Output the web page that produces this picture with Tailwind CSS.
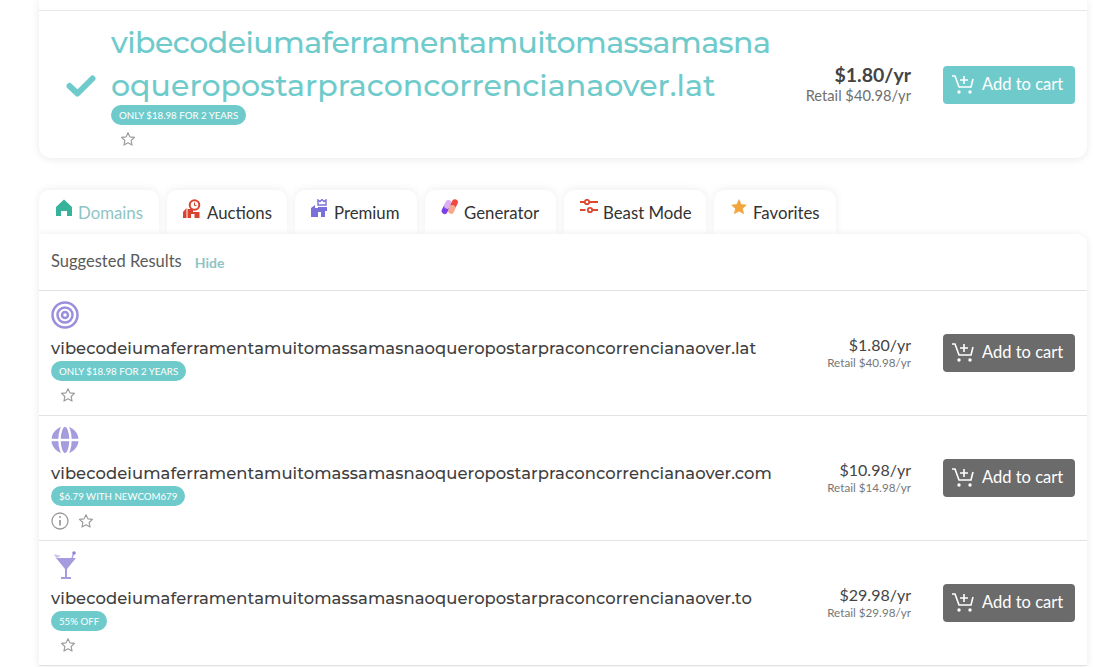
<!DOCTYPE html>
<html><head><meta charset="utf-8"><script src="https://cdn.jsdelivr.net/npm/@tailwindcss/browser@4"></script></head>
<body class="bg-white overflow-hidden font-['Lato','Noto_Sans',sans-serif] text-[#3f3f3f]">
<div class="w-[1093px] h-[667px] overflow-hidden pl-[39px] pr-[6px]">
  <section class="h-[158px] pt-[10px] bg-white rounded-b-[12px] shadow-[0_1px_8px_rgba(0,0,0,0.09)]">
    <div class="h-[148px] border-t border-[#e8e8e8] flex pr-[12px]">
      <div class="w-[72px] pt-[63px] pl-[27px] shrink-0">
        <svg width="30" height="24" viewBox="0 0 30 24"><path d="M3.500 12 L11.500 19.500 L26.500 4.500" fill="none" stroke="#6fcbcb" stroke-width="6" stroke-linecap="round" stroke-linejoin="round"/></svg>
      </div>
      <div class="w-[668px] shrink-0">
        <div class="pt-[10px] font-['Montserrat','Lato',sans-serif] font-medium text-[30px] leading-[43px] text-[#6fcbcb] whitespace-nowrap">
          <span class="block tracking-[-0.530px]">vibecodeiumaferramentamuitomassamasna</span>
          <span class="block tracking-[0.050px]">oqueropostarpraconcorrencianaover.lat</span>
        </div>
        <span class="mt-[-2px] block w-fit h-[20px] rounded-full bg-[#6fcbcb] px-[8px] text-[9.700px] leading-[20px] text-white">ONLY $18.98 FOR 2 YEARS</span>
        <div class="pl-[9px] pt-[6px]"><svg width="16" height="16" viewBox="0 0 24 24"><path d="M12 2.500l2.900 6.300 6.900.800-5.100 4.700 1.400 6.800-6.100-3.400-6.100 3.400 1.400-6.800-5.100-4.700 6.900-.800z" fill="none" stroke="#9a9a9a" stroke-width="1.700" stroke-linejoin="round"/></svg></div>
      </div>
      <div class="flex-1 text-right pt-[52px]">
        <div class="text-[19.500px] leading-[24px] font-bold text-[#444]">$1.80/yr</div>
        <div class="text-[14.700px] leading-[17px] text-[#6f6f6f]">Retail $40.98/yr</div>
      </div>
      <div class="pt-[55px] pl-[32px]">
        <button class="w-[132px] h-[38px] rounded-[4px] bg-[#6fcbcb] text-white text-[16.500px] flex items-center pl-[8px] gap-[7px]">
          <svg width="24" height="20" viewBox="0 0 24 20" fill="none" stroke="#fff" stroke-width="1.600"><path d="M1 1h3l4 11h12l2-8"/><path d="M13 1v8M9 5h8"/><circle cx="8" cy="17" r="1.700" fill="#fff" stroke="none"/><circle cx="19" cy="17" r="1.700" fill="#fff" stroke="none"/></svg>
          <span class="mt-[-1px]">Add to cart</span>
        </button>
      </div>
    </div>
  </section>

  <nav class="mt-[32px] h-[44px] flex gap-[8px] text-[16.800px] relative z-10">
    <div class="w-[120px] h-[45px] bg-white rounded-t-[10px] shadow-[0_-1px_8px_rgba(0,0,0,0.07)] flex items-start pl-[17px] pt-[9px] gap-[6px] text-[#8fc4c4]">
      <svg width="16" height="18" viewBox="0 0 16 18"><path d="M8 0.500L16 8v9h-5v-5H5v5H0V8z" fill="#38b39b"/></svg><span class="leading-[28px]">Domains</span>
    </div>
    <div class="w-[120px] h-[44px] bg-white rounded-t-[10px] shadow-[0_-1px_8px_rgba(0,0,0,0.07)] flex items-start pl-[16px] pt-[9px] gap-[6px] text-[#333]">
      <svg width="18" height="19" viewBox="0 0 18 19"><path d="M0 13l3.500-4V19H0zM4.500 10h5.500v3h6.500v6H11.500v-4H8v4H4.500z" fill="#d9432f"/><circle cx="11.500" cy="6" r="4.800" fill="#fff" stroke="#d9432f" stroke-width="2"/><path d="M11.500 3.500v3h2" stroke="#d9432f" stroke-width="1" fill="none"/></svg><span class="leading-[28px]">Auctions</span>
    </div>
    <div class="w-[122px] h-[44px] bg-white rounded-t-[10px] shadow-[0_-1px_8px_rgba(0,0,0,0.07)] flex items-start pl-[16px] pt-[9px] gap-[6px] text-[#333]">
      <svg width="17" height="18" viewBox="0 0 17 18"><path d="M0 9l4-3v3h3v-1h9v4h-2v6h-4v-5H7v5H0z" fill="#7a70dc"/><path d="M7 6V1l2 1.500L11 .500 13 2.500 15 1v5z" fill="none" stroke="#7a70dc" stroke-width="1.400"/></svg><span class="leading-[28px]">Premium</span>
    </div>
    <div class="w-[131px] h-[44px] bg-white rounded-t-[10px] shadow-[0_-1px_8px_rgba(0,0,0,0.07)] flex items-start pl-[16px] pt-[9px] gap-[5px] text-[#333]">
      <svg width="18" height="16" viewBox="0 0 18 16"><rect x="1.500" y="5" width="6" height="10" rx="3" transform="rotate(25 4 10)" fill="#7a3fe8"/><rect x="4" y="1" width="6" height="9" rx="3" transform="rotate(25 7 5)" fill="#dcb0f0"/><rect x="10.500" y="0" width="6" height="9" rx="3" transform="rotate(25 13 4)" fill="#f0473f"/><rect x="8" y="6" width="6" height="9" rx="3" transform="rotate(25 11 10)" fill="#f6a98e"/></svg><span class="leading-[28px]">Generator</span>
    </div>
    <div class="w-[142px] h-[44px] bg-white rounded-t-[10px] shadow-[0_-1px_8px_rgba(0,0,0,0.07)] flex items-start pl-[16px] pt-[9px] gap-[5px] text-[#333]">
      <svg width="18" height="15" viewBox="0 0 18 15" fill="none" stroke="#e0472f" stroke-width="1.800"><path d="M0 3h4.500M10 3h8M0 11h5.500M12 11h6"/><circle cx="7" cy="3" r="2.200"/><circle cx="10" cy="11" r="2.200"/></svg><span class="leading-[28px]">Beast Mode</span>
    </div>
    <div class="w-[122px] h-[44px] bg-white rounded-t-[10px] shadow-[0_-1px_8px_rgba(0,0,0,0.07)] flex items-start pl-[17px] pt-[9px] gap-[6px] text-[#333]">
      <svg width="16" height="16" viewBox="0 0 24 24"><path d="M12 1l3.300 7.300 7.700.800-5.700 5.200 1.600 7.700-6.900-3.900-6.900 3.900 1.600-7.700L1 9.100l7.700-.800z" fill="#f0a63c" stroke="#f0a63c" stroke-linejoin="round"/></svg><span class="leading-[28px]">Favorites</span>
    </div>
  </nav>

  <main class="bg-white rounded-tr-[10px] shadow-[0_1px_8px_rgba(0,0,0,0.09)] relative z-20">
    <header class="h-[57px] border-b border-[#e2e2e2] flex items-start pl-[12px] pt-[17px] gap-[13px]">
      <span class="text-[16.500px] leading-[20px] text-[#5a5a5a]">Suggested Results</span>
      <span class="text-[14px] leading-[24px] font-bold text-[#8fc4c4]">Hide</span>
    </header>

    <article class="h-[125px] border-b border-[#e2e2e2] flex pl-[12px] pr-[12px]">
      <div class="w-[760px] shrink-0">
        <div class="pt-[10px] h-[45px]"><svg width="28" height="28" viewBox="0 0 28 28" fill="none" stroke="#9a8fdc" stroke-width="2.500"><circle cx="14" cy="14" r="12.500"/><circle cx="14" cy="14" r="7.500"/><circle cx="14" cy="14" r="3"/></svg></div>
        <div class="font-['Montserrat','Lato',sans-serif] font-medium text-[16.400px] tracking-[0.070px] leading-[25px]">vibecodeiumaferramentamuitomassamasnaoqueropostarpraconcorrencianaover.lat</div>
        <span class="block w-fit h-[20px] rounded-full bg-[#6fcbcb] px-[8px] text-[9.700px] leading-[20px] text-white">ONLY $18.98 FOR 2 YEARS</span>
        <div class="pl-[9px] pt-[6px]"><svg width="16" height="16" viewBox="0 0 24 24"><path d="M12 2.500l2.900 6.300 6.900.800-5.100 4.700 1.400 6.800-6.100-3.400-6.100 3.400 1.400-6.800-5.100-4.700 6.900-.800z" fill="none" stroke="#9a9a9a" stroke-width="1.700" stroke-linejoin="round"/></svg></div>
      </div>
      <div class="flex-1 text-right pt-[44px]">
        <div class="text-[16px] leading-[20px] text-[#444]">$1.80/yr</div>
        <div class="text-[11.700px] leading-[15px] text-[#777]">Retail $40.98/yr</div>
      </div>
      <div class="pt-[43px] pl-[32px]">
        <button class="w-[132px] h-[38px] rounded-[4px] bg-[#6b6b6b] text-white text-[16.500px] flex items-center pl-[8px] gap-[7px]">
          <svg width="24" height="20" viewBox="0 0 24 20" fill="none" stroke="#fff" stroke-width="1.600"><path d="M1 1h3l4 11h12l2-8"/><path d="M13 1v8M9 5h8"/><circle cx="8" cy="17" r="1.700" fill="#fff" stroke="none"/><circle cx="19" cy="17" r="1.700" fill="#fff" stroke="none"/></svg>
          <span class="mt-[-2px]">Add to cart</span>
        </button>
      </div>
    </article>

    <article class="h-[125px] border-b border-[#e2e2e2] flex pl-[12px] pr-[12px]">
      <div class="w-[760px] shrink-0">
        <div class="pt-[10px] h-[45px]"><svg width="28" height="28" viewBox="0 0 28 28"><circle cx="14" cy="14" r="13.500" fill="#a49cdf"/><path d="M0 14h28" stroke="#fff" stroke-width="2.400"/><ellipse cx="14" cy="14" rx="5.500" ry="14.500" fill="none" stroke="#fff" stroke-width="2.400"/></svg></div>
        <div class="font-['Montserrat','Lato',sans-serif] font-medium text-[16.400px] tracking-[0.070px] leading-[25px]">vibecodeiumaferramentamuitomassamasnaoqueropostarpraconcorrencianaover.com</div>
        <span class="block w-fit h-[20px] rounded-full bg-[#6fcbcb] px-[8px] text-[9.700px] leading-[20px] text-white">$6.79 WITH NEWCOM679</span>
        <div class="pt-[6px] flex items-center gap-[9px]">
          <svg width="18" height="18" viewBox="0 0 18 18" fill="none" stroke="#9a9a9a" stroke-width="1.300"><circle cx="9" cy="9" r="8"/><path d="M9 8v5.500" stroke-width="1.800"/><circle cx="9" cy="5" r="1" fill="#9a9a9a" stroke="none"/></svg>
          <svg width="16" height="16" viewBox="0 0 24 24"><path d="M12 2.500l2.900 6.300 6.900.800-5.100 4.700 1.400 6.800-6.100-3.400-6.100 3.400 1.400-6.800-5.100-4.700 6.900-.800z" fill="none" stroke="#9a9a9a" stroke-width="1.700" stroke-linejoin="round"/></svg>
        </div>
      </div>
      <div class="flex-1 text-right pt-[44px]">
        <div class="text-[16px] leading-[20px] text-[#444]">$10.98/yr</div>
        <div class="text-[11.700px] leading-[15px] text-[#777]">Retail $14.98/yr</div>
      </div>
      <div class="pt-[43px] pl-[32px]">
        <button class="w-[132px] h-[38px] rounded-[4px] bg-[#6b6b6b] text-white text-[16.500px] flex items-center pl-[8px] gap-[7px]">
          <svg width="24" height="20" viewBox="0 0 24 20" fill="none" stroke="#fff" stroke-width="1.600"><path d="M1 1h3l4 11h12l2-8"/><path d="M13 1v8M9 5h8"/><circle cx="8" cy="17" r="1.700" fill="#fff" stroke="none"/><circle cx="19" cy="17" r="1.700" fill="#fff" stroke="none"/></svg>
          <span class="mt-[-2px]">Add to cart</span>
        </button>
      </div>
    </article>

    <article class="h-[125px] border-b border-[#e2e2e2] flex pl-[12px] pr-[12px]">
      <div class="w-[760px] shrink-0">
        <div class="pt-[10px] h-[45px] pl-[3px]"><svg width="24" height="29" viewBox="0 0 24 29"><path d="M2 7h20L13 18v8h4v2H7v-2h4v-8z" fill="#a49cdf"/><path d="M0 3l7 2-5 2z" fill="#c9c2ee"/><path d="M19.500 3l-1.500 4" stroke="#a49cdf" stroke-width="1.300"/><circle cx="20" cy="2" r="1.800" fill="#8f85d6"/></svg></div>
        <div class="font-['Montserrat','Lato',sans-serif] font-medium text-[16.400px] tracking-[0.070px] leading-[25px]">vibecodeiumaferramentamuitomassamasnaoqueropostarpraconcorrencianaover.to</div>
        <span class="block w-fit h-[20px] rounded-full bg-[#6fcbcb] px-[8px] text-[9.700px] leading-[20px] text-white">55% OFF</span>
        <div class="pl-[9px] pt-[6px]"><svg width="16" height="16" viewBox="0 0 24 24"><path d="M12 2.500l2.900 6.300 6.900.800-5.100 4.700 1.400 6.800-6.100-3.400-6.100 3.400 1.400-6.800-5.100-4.700 6.900-.800z" fill="none" stroke="#9a9a9a" stroke-width="1.700" stroke-linejoin="round"/></svg></div>
      </div>
      <div class="flex-1 text-right pt-[44px]">
        <div class="text-[16px] leading-[20px] text-[#444]">$29.98/yr</div>
        <div class="text-[11.700px] leading-[15px] text-[#777]">Retail $29.98/yr</div>
      </div>
      <div class="pt-[43px] pl-[32px]">
        <button class="w-[132px] h-[38px] rounded-[4px] bg-[#6b6b6b] text-white text-[16.500px] flex items-center pl-[8px] gap-[7px]">
          <svg width="24" height="20" viewBox="0 0 24 20" fill="none" stroke="#fff" stroke-width="1.600"><path d="M1 1h3l4 11h12l2-8"/><path d="M13 1v8M9 5h8"/><circle cx="8" cy="17" r="1.700" fill="#fff" stroke="none"/><circle cx="19" cy="17" r="1.700" fill="#fff" stroke="none"/></svg>
          <span class="mt-[-2px]">Add to cart</span>
        </button>
      </div>
    </article>
  </main>
</div>
</body></html>
